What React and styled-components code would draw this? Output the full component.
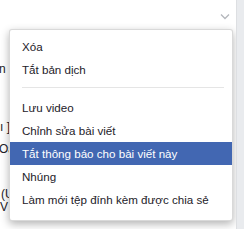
import styled, { createGlobalStyle } from "styled-components";

const Global = createGlobalStyle`
html, body {
    margin: 0;
    padding: 0;
    background: #e9ebee;
}
body {
    font-family: "Liberation Sans", Arial, Helvetica, sans-serif;
    font-size: 12px;
    color: #1d2129;
}
`;

const Page = styled.div`
width: 244px;
height: 229px;
display: flex;
overflow: hidden;
position: relative;
`;

const Card = styled.div`
width: 236px;
height: 100%;
background: #fff;
border-right: 1px solid #dddfe2;
display: flex;
flex-direction: column;
position: relative;
overflow: hidden;
`;

const Header = styled.div`
height: 26px;
display: flex;
justify-content: flex-end;
align-items: center;
padding: 6px 6px 0 0;
box-sizing: border-box;
`;

const Chevron = styled.svg`
width: 10px;
height: 7px;
`;

const BackText = styled.div`
line-height: 14px;
height: 14px;
margin-top: ${({ $mt }) => $mt}px;
margin-left: ${({ $ml }) => $ml || 0}px;
white-space: nowrap;
color: #1d2129;
`;

const Menu = styled.div`
position: absolute;
left: 9px;
top: 29px;
width: 222px;
background: #fff;
border: 1px solid rgba(0, 0, 0, 0.15);
border-radius: 3px;
box-shadow: 0 3px 8px rgba(0, 0, 0, 0.3);
padding: 5px 0 9px;
display: flex;
flex-direction: column;
`;

const Item = styled.div`
height: 23px;
line-height: 23px;
padding: 0 12px;
font-size: 11.6px;
white-space: nowrap;
color: ${({ $active }) => ($active ? "#fff" : "#1d2129")};
background: ${({ $active }) => ($active ? "#4267b2" : "transparent")};
`;

const Separator = styled.div`
height: 1px;
background: #e5e5e5;
margin: 6px 8px 8px 12px;
`;

export default function App() {
    return (
        <Page>
            <Global />
            <Card>
                <Header>
                    <Chevron viewBox="0 0 10 7">
                        <path d="M1 1.5 L5 5.5 L9 1.5" fill="none" stroke="#b4b7bc" strokeWidth="1.3" />
                    </Chevron>
                </Header>
                <BackText $mt={36} $ml={-1}>n</BackText>
                <BackText $mt={44} $ml={0}>ı ]</BackText>
                <BackText $mt={8} $ml={-1}>Oa</BackText>
                <BackText $mt={31} $ml={1}>(U</BackText>
                <BackText $mt={-1} $ml={0}>V</BackText>
                <Menu>
                    <Item>Xóa</Item>
                    <Item>Tắt bản dịch</Item>
                    <Separator />
                    <Item>Lưu video</Item>
                    <Item>Chỉnh sửa bài viết</Item>
                    <Item $active>Tắt thông báo cho bài viết này</Item>
                    <Item>Nhúng</Item>
                    <Item>Làm mới tệp đính kèm được chia sẻ</Item>
                </Menu>
            </Card>
        </Page>
    );
}
